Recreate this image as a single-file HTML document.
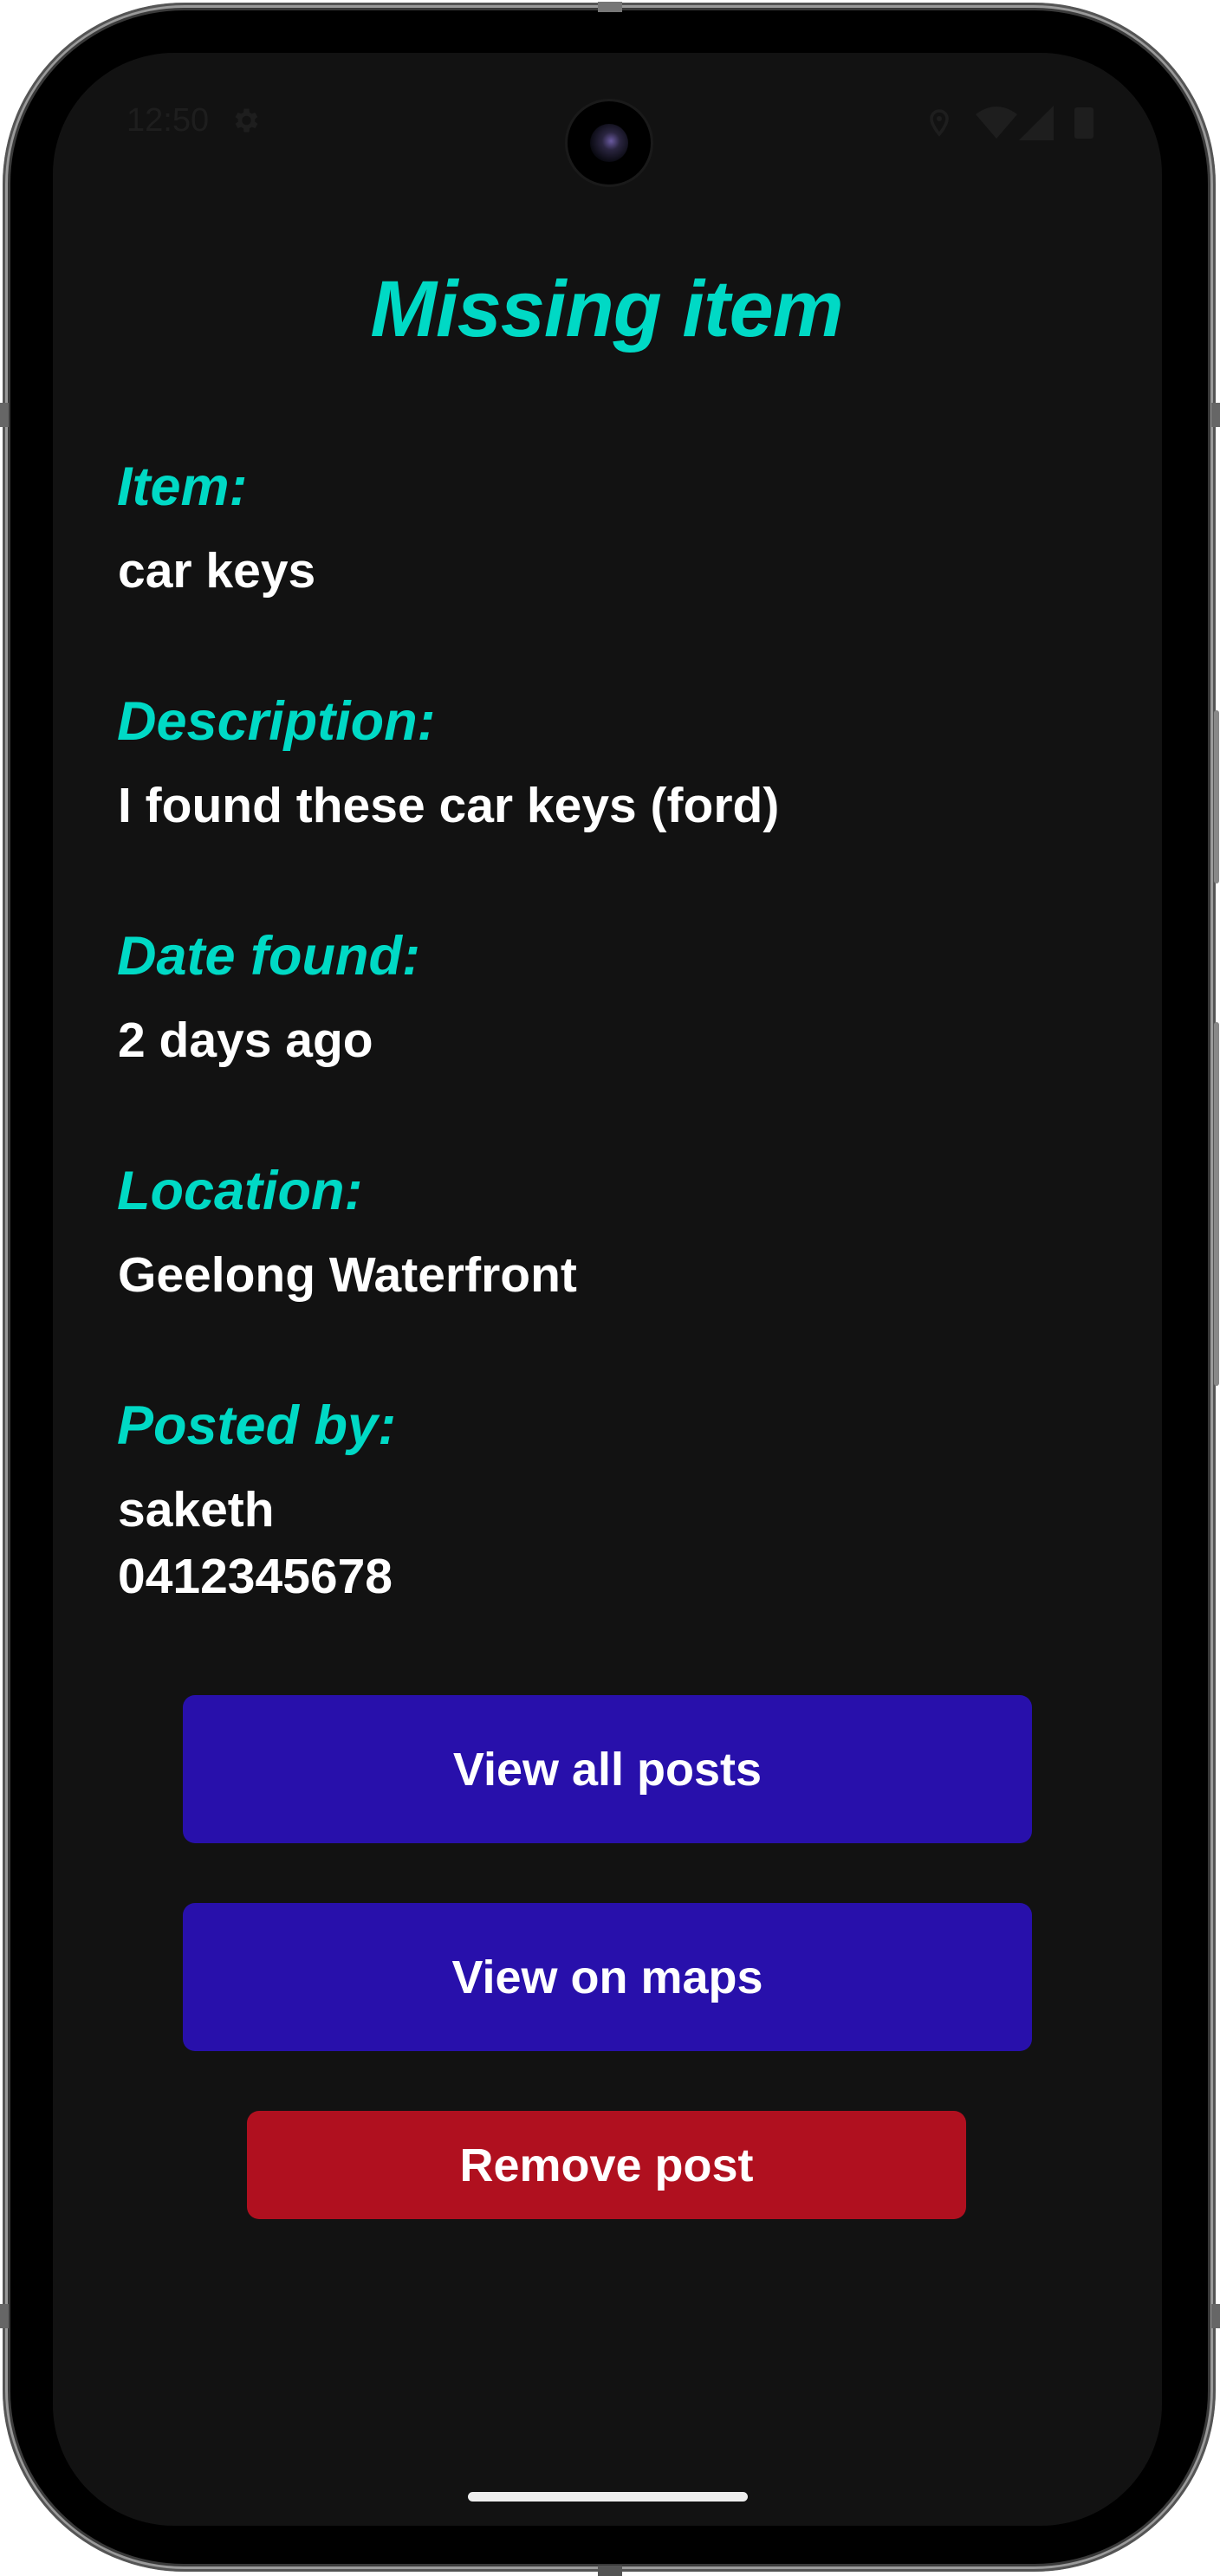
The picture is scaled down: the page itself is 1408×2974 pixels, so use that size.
<!DOCTYPE html>
<html><head><meta charset="utf-8"><style>
html,body{margin:0;padding:0;background:#fff;}
body{width:1408px;height:2974px;position:relative;overflow:hidden;font-family:"Liberation Sans",sans-serif;}
.frame{position:absolute;left:3px;top:3px;width:1400px;height:2966px;border-radius:210px;background:#9a9a9a;box-shadow:inset 0 0 0 3px #555;}
.bezel{position:absolute;left:12px;top:12px;width:1382px;height:2948px;border-radius:200px;background:#000;box-shadow:0 0 0 3px #3a3a3a;}
.screen{position:absolute;left:61px;top:61px;width:1280px;height:2855px;border-radius:140px;background:#121212;}
.abs{position:absolute;white-space:nowrap;line-height:1;}
.lab{color:#00d9c5;font-weight:bold;font-style:italic;font-size:63px;left:135px;}
.val{color:#fff;font-weight:bold;font-size:57px;left:136px;}
.btn{position:absolute;border-radius:14px;color:#fff;font-weight:bold;font-size:54px;display:flex;align-items:center;justify-content:center;}
.side{position:absolute;background:#555;}
</style></head><body>
<div class="frame"></div>
<div class="bezel"></div>
<div class="side" style="left:690px;top:2px;width:28px;height:12px;background:#777"></div>
<div class="side" style="left:1401px;top:820px;width:6px;height:200px;background:#888;border-radius:3px"></div>
<div class="side" style="left:1401px;top:1180px;width:6px;height:420px;background:#888;border-radius:3px"></div>
<div class="side" style="left:0;top:465px;width:10px;height:28px;background:#666"></div>
<div class="side" style="left:1398px;top:465px;width:10px;height:28px;background:#666"></div>
<div class="side" style="left:0;top:2660px;width:10px;height:28px;background:#666"></div>
<div class="side" style="left:1398px;top:2660px;width:10px;height:28px;background:#666"></div>
<div class="side" style="left:690px;top:2962px;width:28px;height:12px;background:#555"></div>
<div class="screen"></div>
<!-- status bar -->
<div class="abs" style="left:146px;top:120px;font-size:38px;color:#1e1e1e;">12:50</div>
<svg class="abs" style="left:265px;top:121px" width="36" height="36" viewBox="0 0 24 24"><path fill="#1e1e1e" d="M19.4 13a7.5 7.5 0 0 0 0-2l2.1-1.6-2-3.5-2.5 1a7 7 0 0 0-1.7-1L15 3h-4l-.4 2.9a7 7 0 0 0-1.7 1l-2.5-1-2 3.5L6.5 11a7.5 7.5 0 0 0 0 2l-2.1 1.6 2 3.5 2.5-1a7 7 0 0 0 1.7 1L11 21h4l.4-2.9a7 7 0 0 0 1.7-1l2.5 1 2-3.5zM13 15.5A3.5 3.5 0 1 1 13 8.5a3.5 3.5 0 0 1 0 7z"/></svg>
<svg class="abs" style="left:1066px;top:120px" width="36" height="40" viewBox="0 0 24 24"><path fill="none" stroke="#1e1e1e" stroke-width="2.4" d="M12 22s-6-7-6-12a6 6 0 0 1 12 0c0 5-6 12-6 12z"/><circle cx="12" cy="10" r="2" fill="#1e1e1e"/></svg>
<svg class="abs" style="left:1126px;top:122px" width="48" height="38" viewBox="0 0 24 19"><path fill="#1e1e1e" d="M0 5Q12-4 24 5L12 19z"/></svg>
<svg class="abs" style="left:1176px;top:122px" width="40" height="40" viewBox="0 0 20 20"><path fill="#1e1e1e" d="M20 0V20H0z"/></svg>
<div class="abs" style="left:1240px;top:124px;width:22px;height:36px;background:#1e1e1e;border-radius:3px"></div>
<!-- camera -->
<div class="abs" style="left:652px;top:114px;width:96px;height:96px;border-radius:50%;background:#000;border:3px solid #1a1a1a"></div>
<div class="abs" style="left:681px;top:143px;width:44px;height:44px;border-radius:50%;background:radial-gradient(circle at 55% 45%,#6a5aa0 0,#2a2540 30%,#0a0a12 70%)"></div>
<!-- content -->
<div class="abs" style="left:0;width:1400px;text-align:center;top:311px;color:#00d9c5;font-weight:bold;font-style:italic;font-size:92px;letter-spacing:-1px">Missing item</div>
<div class="abs lab" style="top:531px">Item:</div>
<div class="abs val" style="top:631px">car keys</div>
<div class="abs lab" style="top:802px">Description:</div>
<div class="abs val" style="top:902px">I found these car keys (ford)</div>
<div class="abs lab" style="top:1073px">Date found:</div>
<div class="abs val" style="top:1173px">2 days ago</div>
<div class="abs lab" style="top:1344px">Location:</div>
<div class="abs val" style="top:1444px">Geelong Waterfront</div>
<div class="abs lab" style="top:1615px">Posted by:</div>
<div class="abs val" style="top:1715px">saketh</div>
<div class="abs val" style="top:1792px">0412345678</div>
<div class="btn" style="left:211px;top:1957px;width:980px;height:171px;background:#2810ab">View all posts</div>
<div class="btn" style="left:211px;top:2197px;width:980px;height:171px;background:#2810ab">View on maps</div>
<div class="btn" style="left:285px;top:2437px;width:830px;height:125px;background:#b0101f">Remove post</div>
<div class="abs" style="left:540px;top:2877px;width:323px;height:11px;border-radius:6px;background:#eee"></div>
</body></html>
